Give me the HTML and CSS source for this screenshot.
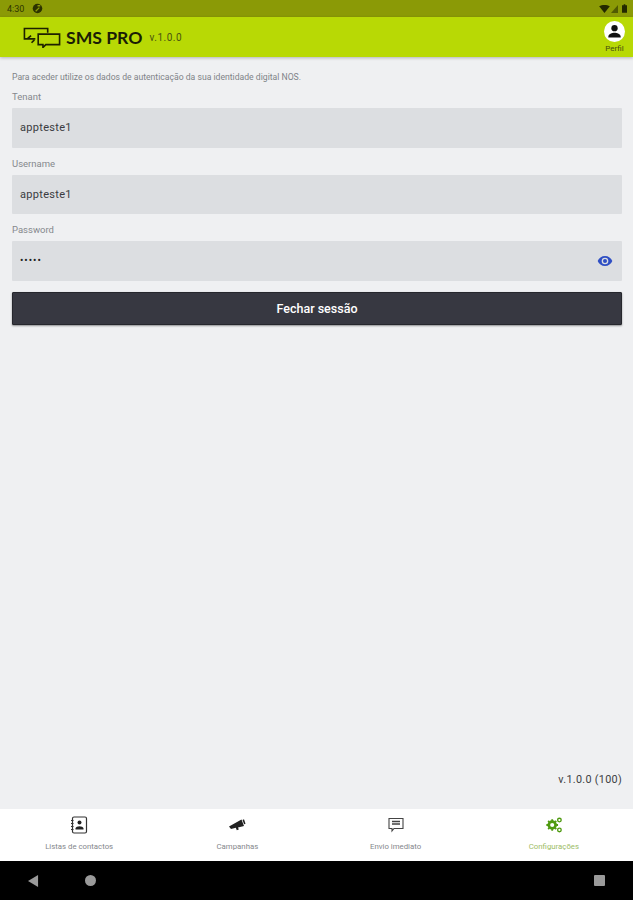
FILE: index.html
```html
<!DOCTYPE html>
<html lang="pt">
<head>
    <meta charset="UTF-8">
    <meta name="viewport" content="width=device-width, initial-scale=1.0">
    <title>SMS PRO</title>
    <link rel="stylesheet" href="styles.css">
</head>
<body>
    <div class="app">
        <div class="status-bar">
            <div class="status-left">
                <span class="clock">4:30</span>
                <svg class="status-app" viewBox="0 0 12 12"><circle cx="6" cy="6" r="5.2" fill="#2c3200"/><path d="M6 3h3M4 9l4-4" stroke="#8b9a06" stroke-width="1.4" fill="none"/></svg>
            </div>
            <div class="status-right">
                <svg class="status-wifi" viewBox="0 0 12 9"><path d="M0 1.500C3.500-.5 8.500-.5 12 1.500L6 9z" fill="#232800"/></svg>
                <svg class="status-signal" viewBox="0 0 8 9"><path d="M0 9L8 0v9z" fill="#232800" opacity=".55"/></svg>
                <svg class="status-battery" viewBox="0 0 6 10"><path d="M2 0h2v1h2v9H0V1h2z" fill="#232800"/></svg>
            </div>
        </div>

        <header class="top-bar">
            <div class="brand">
                <svg class="brand-icon" viewBox="0 0 40 22" fill="none" stroke="#1d2100" stroke-width="1.7">
                    <path d="M13 12.500H1.500V1.500H26V6"/>
                    <path d="M5 12l3.500-3M9 16.500l3-3"/>
                    <path d="M16 7.500H38.500V18.500H24L21 21.500V18.500H16z"/>
                </svg>
                <span class="brand-name">SMS PRO</span>
                <span class="brand-version">v.1.0.0</span>
            </div>
            <div class="profile">
                <div class="profile-icon">
                    <svg viewBox="0 0 22 22"><circle cx="11" cy="7.500" r="3.300" fill="#111"/><path d="M4.500 16.500c0-3 4-4.200 6.500-4.200s6.500 1.200 6.500 4.200v.8h-13z" fill="#111"/></svg>
                </div>
                <span class="profile-label">Perfil</span>
            </div>
        </header>

        <main class="content">
            <p class="intro">Para aceder utilize os dados de autenticação da sua identidade digital NOS.</p>

            <label class="field-label">Tenant</label>
            <div class="field">appteste1</div>

            <label class="field-label">Username</label>
            <div class="field">appteste1</div>

            <label class="field-label">Password</label>
            <div class="field field-password">
                <span class="dots">•••••</span>
                <svg class="eye" viewBox="0 0 24 24"><path fill="#2f4fc4" d="M12 4.500C7 4.500 2.700 7.600 1 12c1.700 4.400 6 7.500 11 7.500s9.300-3.100 11-7.500c-1.700-4.400-6-7.500-11-7.500zM12 17a5 5 0 1 1 0-10 5 5 0 0 1 0 10zm0-8a3 3 0 1 0 0 6 3 3 0 0 0 0-6z"/></svg>
            </div>

            <button class="logout">Fechar sessão</button>

            <div class="app-version">v.1.0.0 (100)</div>
        </main>

        <nav class="bottom-nav">
            <div class="nav-item">
                <svg class="nav-icon" viewBox="0 0 18 18" fill="none" stroke="#333" stroke-width="1.200">
                    <rect x="2.500" y="1" width="14" height="16" rx="1.500"/>
                    <path d="M1 4.500h2.500M1 7.500h2.500M1 10.500h2.500M1 13.500h2.500"/>
                    <circle cx="9.500" cy="6.500" r="2" fill="#222" stroke="none"/>
                    <path d="M5.500 13.500v-1c0-1.500 2.500-2.200 4-2.200s4 .7 4 2.200v1z" fill="#222" stroke="none"/>
                </svg>
                <span>Listas de contactos</span>
            </div>
            <div class="nav-item">
                <svg class="nav-icon" viewBox="0 0 18 18"><path fill="#222" d="M1 10.500L13.500 3.500l2.500 6.500-6 1.500.8 2-2 .8-1-2.500-4.800 1.200z"/><path fill="#222" d="M14.500 4l1.500-.8 1.500 4.500-1.400.5z"/></svg>
                <span>Campanhas</span>
            </div>
            <div class="nav-item">
                <svg class="nav-icon" viewBox="0 0 18 18" fill="none" stroke="#444" stroke-width="1.100">
                    <path d="M2 2.500h14v10H7l-2 2.500v-2.500H2z"/>
                    <path d="M5 5.500h8M5 8h8" stroke-width="1.500"/>
                </svg>
                <span>Envio imediato</span>
            </div>
            <div class="nav-item active">
                <svg class="nav-icon" viewBox="0 0 20 20" fill="none" stroke="#4f9a10">
                    <circle cx="8" cy="10" r="3.800" stroke-width="3"/>
                    <path d="M8 3.500v2M8 14.500v2M1.500 10h2M12.500 10h2M3.500 5.500l1.300 1.300M11.200 13.200l1.300 1.300M3.500 14.500l1.300-1.300M11.200 6.800l1.300-1.300" stroke-width="2"/>
                    <circle cx="16" cy="4.500" r="2" stroke-width="1.500"/>
                    <circle cx="16" cy="15.500" r="2" stroke-width="1.500"/>
                </svg>
                <span>Configurações</span>
            </div>
        </nav>

        <div class="system-nav">
            <svg class="sys-back" viewBox="0 0 12 13"><path d="M11 0v13L0 6.500z" fill="#9a9a9a"/></svg>
            <div class="sys-home"></div>
            <div class="sys-spacer"></div>
            <div class="sys-recent"></div>
        </div>
    </div>
</body>
</html>
```

FILE: styles.css
```css
/* Basic reset */
* {
    margin: 0;
    padding: 0;
    box-sizing: border-box;
    font-family: 'Roboto', 'Liberation Sans', sans-serif;
}

body {
    background-color: #eff0f2;
    width: 633px;
    height: 900px;
    overflow: hidden;
}

.app {
    height: 900px;
    display: flex;
    flex-direction: column;
}

/* Android status bar */
.status-bar {
    height: 17px;
    flex-shrink: 0;
    background-color: #8b9a06;
    display: flex;
    justify-content: space-between;
    align-items: center;
    padding: 0 6px 0 7px;
}

.status-left,
.status-right {
    display: flex;
    align-items: center;
}

.clock {
    font-size: 9px;
    color: #2f3500;
}

.status-app {
    width: 11px;
    height: 11px;
    margin-left: 8px;
}

.status-wifi {
    width: 11px;
    height: 8px;
}

.status-signal {
    width: 7px;
    height: 8px;
    margin-left: 1px;
}

.status-battery {
    width: 5px;
    height: 9px;
    margin-left: 4px;
}

/* App header */
.top-bar {
    height: 40px;
    flex-shrink: 0;
    background-color: #b8d905;
    box-shadow: 0 1px 3px rgba(0, 0, 0, 0.25);
    display: flex;
    justify-content: space-between;
    align-items: center;
    padding: 0 8px 0 23px;
    position: relative;
}

.brand {
    display: flex;
    align-items: center;
}

.brand-icon {
    width: 38px;
    height: 21px;
}

.brand-name {
    font-family: 'Lato', 'Liberation Sans', sans-serif;
    font-size: 17.600px;
    font-weight: 700;
    color: #1a1d05;
    margin-left: 5px;
}

.brand-version {
    font-size: 10px;
    letter-spacing: 0.5px;
    color: #4a5410;
    margin-left: 7px;
    margin-top: 1px;
}

.profile {
    display: flex;
    flex-direction: column;
    align-items: center;
}

.profile-icon {
    width: 21px;
    height: 21px;
    border-radius: 50%;
    background-color: #fff;
}

.profile-icon svg {
    display: block;
    width: 21px;
    height: 21px;
}

.profile-label {
    font-size: 8px;
    color: #454d12;
    margin-top: 2px;
}

/* Login form */
.content {
    flex: 1;
    padding: 15px 11px 0 12px;
    display: flex;
    flex-direction: column;
}

.intro {
    font-size: 8.650px;
    line-height: 10px;
    color: #808388;
}

.field-label {
    font-size: 9.500px;
    line-height: 12px;
    color: #85888d;
    margin-top: 8px;
    margin-bottom: 5px;
}

.field-label:first-of-type {
    margin-top: 9px;
}

.field {
    height: 39.500px;
    background-color: #dcdee1;
    display: flex;
    align-items: center;
    padding: 0 9px 0 8px;
    font-size: 11px;
    letter-spacing: 0.3px;
    color: #3a3c40;
    border-radius: 1px;
    margin-bottom: 2px;
}

.field-password {
    justify-content: space-between;
}

.dots {
    font-size: 10px;
    letter-spacing: 1px;
    color: #222;
}

.eye {
    width: 16px;
    height: 16px;
}

.logout {
    height: 33px;
    margin-top: 9px;
    background-color: #373841;
    border: 1px solid #26272d;
    border-radius: 1px;
    box-shadow: 0 1px 2px rgba(0, 0, 0, 0.4);
    color: #fff;
    font-size: 12.500px;
    font-weight: 500;
}

.app-version {
    margin-top: auto;
    margin-bottom: 23px;
    text-align: right;
    font-size: 10.800px;
    letter-spacing: 0.3px;
    color: #3c3e42;
}

/* Bottom tabs */
.bottom-nav {
    height: 52px;
    flex-shrink: 0;
    background-color: #fff;
    display: grid;
    grid-template-columns: repeat(4, 1fr);
}

.nav-item {
    display: flex;
    flex-direction: column;
    align-items: center;
    padding-top: 7px;
    font-size: 7.800px;
    color: #85888c;
}

.nav-item span {
    margin-top: 8px;
}

.nav-item.active {
    color: #9dbd66;
}

.nav-icon {
    width: 18px;
    height: 18px;
}

/* Android navigation */
.system-nav {
    height: 39px;
    flex-shrink: 0;
    background-color: #000;
    display: flex;
    align-items: center;
    padding: 0 28px;
}

.sys-back {
    width: 11px;
    height: 12px;
}

.sys-home {
    width: 11px;
    height: 11px;
    border-radius: 50%;
    background-color: #9a9a9a;
    margin-left: 46px;
}

.sys-spacer {
    flex: 1;
}

.sys-recent {
    width: 11px;
    height: 11px;
    border-radius: 1px;
    background-color: #9a9a9a;
}
```
